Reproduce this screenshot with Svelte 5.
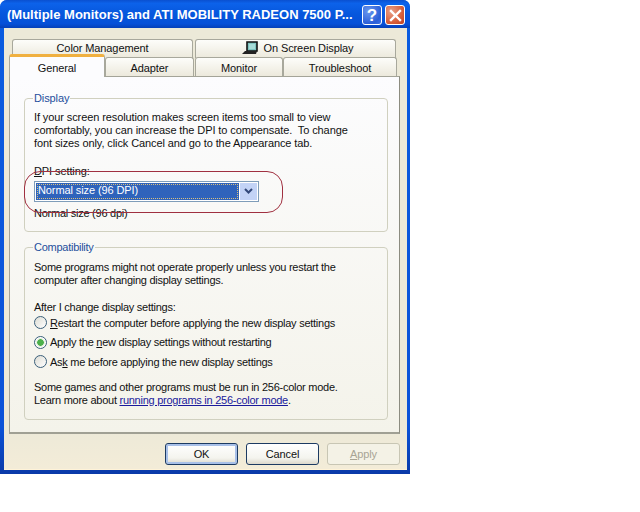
<script>
  const backTabs = ['Color Management', 'On Screen Display'];
  const frontTabs = [
    { label: 'Adapter', width: 89 },
    { label: 'Monitor', width: 88 },
    { label: 'Troubleshoot', width: 114 }
  ];
</script>

<div class="window">
  <header class="titlebar">
    <span class="title">(Multiple Monitors) and ATI MOBILITY RADEON 7500 P...</span>
    <button class="cap help" aria-label="Help">?</button>
    <button class="cap close" aria-label="Close">
      <svg width="13" height="13" viewBox="0 0 13 13"><path d="M2 2l9 9M11 2l-9 9" stroke="#fff" stroke-width="2.4" stroke-linecap="square" /></svg>
    </button>
  </header>

  <div class="client">
    <div class="tabs">
      <div class="row back">
        <div class="tab color">{backTabs[0]}</div>
        <div class="tab osd">
          <svg width="17" height="15" viewBox="0 0 17 15">
            <path d="M5 1h10v9H5z" fill="#7fc4c0" stroke="#111" stroke-width="1.6" />
            <path d="M3 10h12l-1 3H0z" fill="#222" />
            <path d="M7 3h6v5H7z" fill="#a6dcd8" />
          </svg>
          <span>{backTabs[1]}</span>
        </div>
      </div>
      <div class="row front">
        <div class="tab active">General</div>
        {#each frontTabs as t}
          <div class="tab" style="width: {t.width}px">{t.label}</div>
        {/each}
      </div>
    </div>

    <main class="panel">
      <fieldset class="group display">
        <legend>Display</legend>
        <p>If your screen resolution makes screen items too small to view<br />comfortably, you can increase the DPI to compensate.&nbsp; To change<br />font sizes only, click Cancel and go to the Appearance tab.</p>
        <div class="dpi-label"><u>D</u>PI setting:</div>
        <div class="select">
          <span class="value"><span>Normal size (96 DPI)</span></span>
          <span class="arrow">
            <svg width="9" height="7" viewBox="0 0 9 7"><path d="M1 1l3.500 3.500L8 1" fill="none" stroke="#33487a" stroke-width="2" /></svg>
          </span>
        </div>
        <div class="dpi-value">Normal size (96 dpi)</div>
      </fieldset>

      <fieldset class="group compat">
        <legend>Compatibility</legend>
        <p>Some programs might not operate properly unless you restart the<br />computer after changing display settings.</p>
        <div class="after">After I change display settings:</div>
        <div class="radios">
          <div class="radio"><span class="dot"></span><span><u>R</u>estart the computer before applying the new display settings</span></div>
          <div class="radio"><span class="dot on"></span><span>Apply the <u>n</u>ew display settings without restarting</span></div>
          <div class="radio"><span class="dot"></span><span>As<u>k</u> me before applying the new display settings</span></div>
        </div>
        <p class="note">Some games and other programs must be run in 256-color mode.<br />Learn more about <a href="#top">running programs in 256-color mode</a>.</p>
      </fieldset>
    </main>

    <footer class="buttons">
      <button class="btn default">OK</button>
      <button class="btn">Cancel</button>
      <button class="btn off"><u>A</u>pply</button>
    </footer>
  </div>

  <!-- hand-drawn annotation on top of the screenshot -->
  <div class="annotation"></div>
</div>

<style>
  :global(body) {
    background: #fff;
  }

  .window {
    position: relative;
    width: 410px;
    height: 474px;
    box-sizing: border-box;
    display: flex;
    flex-direction: column;
    background: linear-gradient(#0a5ce0, #0a52d8 90%, #0a3aa8);
    border-radius: 7px 7px 0 0;
    font: 11px/14px "Liberation Sans", Arial, sans-serif;
    letter-spacing: -0.1px;
    color: #111;
    overflow: hidden;
  }

  .titlebar {
    box-sizing: border-box;
    height: 28px;
    flex: none;
    display: flex;
    align-items: center;
    padding: 2px 5px 0 7px;
    gap: 3px;
    background: linear-gradient(#0a50d0, #0c62ea 12%, #0657dd 50%, #0650d8 85%, #0540b8);
  }

  .title {
    flex: 1;
    min-width: 0;
    font: bold 13px/16px "Liberation Sans", sans-serif;
    letter-spacing: 0;
    color: #fff;
    white-space: nowrap;
    overflow: hidden;
  }

  .cap {
    width: 20px;
    height: 20px;
    flex: none;
    padding: 0;
    border: 1px solid #fff;
    border-radius: 3px;
    display: flex;
    align-items: center;
    justify-content: center;
    color: #fff;
    font: bold 17px/1 "Liberation Sans", sans-serif;
  }

  .help {
    background: radial-gradient(circle at 30% 30%, #6a98ee, #2b5fd8 70%, #3f74e4);
  }

  .close {
    background: radial-gradient(circle at 30% 30%, #e8a088, #d8603c 60%, #c04020);
  }

  .client {
    flex: 1;
    margin: 0 3px 4px 4px;
    padding: 11px 5px 0 5px;
    background: linear-gradient(#ece9d8, #ece9d8 90%, #f3ecd8);
    display: flex;
    flex-direction: column;
    border-bottom: 1px solid #fff3d8;
  }

  .tabs {
    display: flex;
    flex-direction: column;
    flex: none;
    height: 37px;
  }

  .row {
    display: flex;
    height: 19px;
    flex: none;
  }

  .row.back {
    padding-left: 3px;
    gap: 2px;
  }

  .tab {
    box-sizing: border-box;
    display: flex;
    align-items: center;
    justify-content: center;
    gap: 4px;
    background: linear-gradient(#fdfdfa, #ece9dc);
    border: 1px solid #a8a89c;
    border-bottom: 0;
    border-radius: 3px 3px 0 0;
    height: 19px;
    padding-top: 1px;
  }

  .row.back .tab {
    padding: 0 0 2px;
  }

  .color {
    width: 181px;
  }

  .row.back .osd {
    width: 201px;
    padding-left: 5px;
  }

  .row.front {
    margin-top: -1px;
  }

  .tab.active {
    position: relative;
    z-index: 2;
    width: 96px;
    height: 23px;
    margin-top: -3px;
    background: #fcfcfe;
    border-top: 3px solid #f0b040;
    border-radius: 3px 3px 0 0;
  }

  .row.front .tab:nth-child(3) {
    margin-left: 1px;
  }

  .row.front .tab {
    flex: none;
  }

  .panel {
    box-sizing: border-box;
    width: 391px;
    height: 358px;
    flex: none;
    background: linear-gradient(#fcfcfe, #f4f3ea);
    border: 1px solid #a4a498;
    border-right-color: #8c8c80;
    border-bottom: 2px solid #a0a094;
    padding: 14px 11px 0 14px;
    display: flex;
    flex-direction: column;
    gap: 8px;
  }

  .group {
    margin: 0;
    padding: 0 0 0 9px;
    border: 1px solid #d0d0bf;
    border-radius: 4px;
    min-width: 0;
    box-sizing: border-box;
  }

  .group legend {
    padding: 0 1px;
    margin-left: -1px;
    color: #1f4f9c;
  }

  .display {
    height: 141px;
  }

  .compat {
    height: 180px;
    letter-spacing: -0.26px;
  }

  p {
    margin: 0;
    line-height: 13px;
  }

  .display p {
    margin-top: 6px;
  }

  .dpi-label {
    margin-top: 14px;
  }

  .select {
    box-sizing: border-box;
    margin-top: 3px;
    width: 225px;
    height: 21px;
    display: flex;
    border: 1px solid #7f9db9;
    padding: 1px;
    background: #fff;
  }

  .value {
    flex: 1;
    display: flex;
    background: #2f63bb;
    color: #fff;
    padding: 1px;
  }

  .value span {
    flex: 1;
    padding-left: 1px;
    line-height: 13px;
    outline: 1px dotted #d8c080;
    outline-offset: -1px;
  }

  .arrow {
    width: 17px;
    background: #c3d3f6;
    display: flex;
    align-items: center;
    justify-content: center;
    margin-left: 1px;
  }

  .dpi-value {
    margin-top: 4px;
    letter-spacing: -0.25px;
  }

  .compat p {
    margin-top: 7px;
  }

  .after {
    margin-top: 13px;
  }

  .radios {
    display: flex;
    flex-direction: column;
    gap: 6.500px;
    margin-top: 2px;
  }

  .radio {
    display: flex;
    align-items: center;
    gap: 3px;
    height: 13px;
    white-space: nowrap;
  }

  .dot {
    width: 13px;
    height: 13px;
    box-sizing: border-box;
    flex: none;
    border: 1px solid #3a5f7a;
    border-radius: 50%;
    background: linear-gradient(135deg, #dcdcd4, #fff);
  }

  .dot.on {
    background: radial-gradient(circle, #4cb04c 0 3px, #d8e8d0 3.500px, #fff 5px);
  }

  .compat p.note {
    margin-top: 13px;
  }

  a {
    color: #1a1a9c;
    text-decoration: underline;
  }

  .buttons {
    display: flex;
    justify-content: flex-end;
    gap: 8px;
    padding: 9px 2px 0 0;
  }

  .btn {
    width: 73px;
    height: 22px;
    padding: 0;
    font: inherit;
    letter-spacing: inherit;
    color: #111;
    border: 1px solid #1c3a62;
    border-radius: 3px;
    background: linear-gradient(#fff, #f4f4ee 70%, #dcd8cc);
  }

  .btn.default {
    box-shadow: inset 0 0 0 2px #a8c0e8;
  }

  .btn.off {
    color: #a8a494;
    border-color: #c8c6b4;
    background: #f4f2e6;
  }

  .annotation {
    position: absolute;
    left: 24px;
    top: 171px;
    width: 259px;
    height: 42px;
    box-sizing: border-box;
    border: 1px solid #a03040;
    border-radius: 16px;
    pointer-events: none;
  }
</style>
